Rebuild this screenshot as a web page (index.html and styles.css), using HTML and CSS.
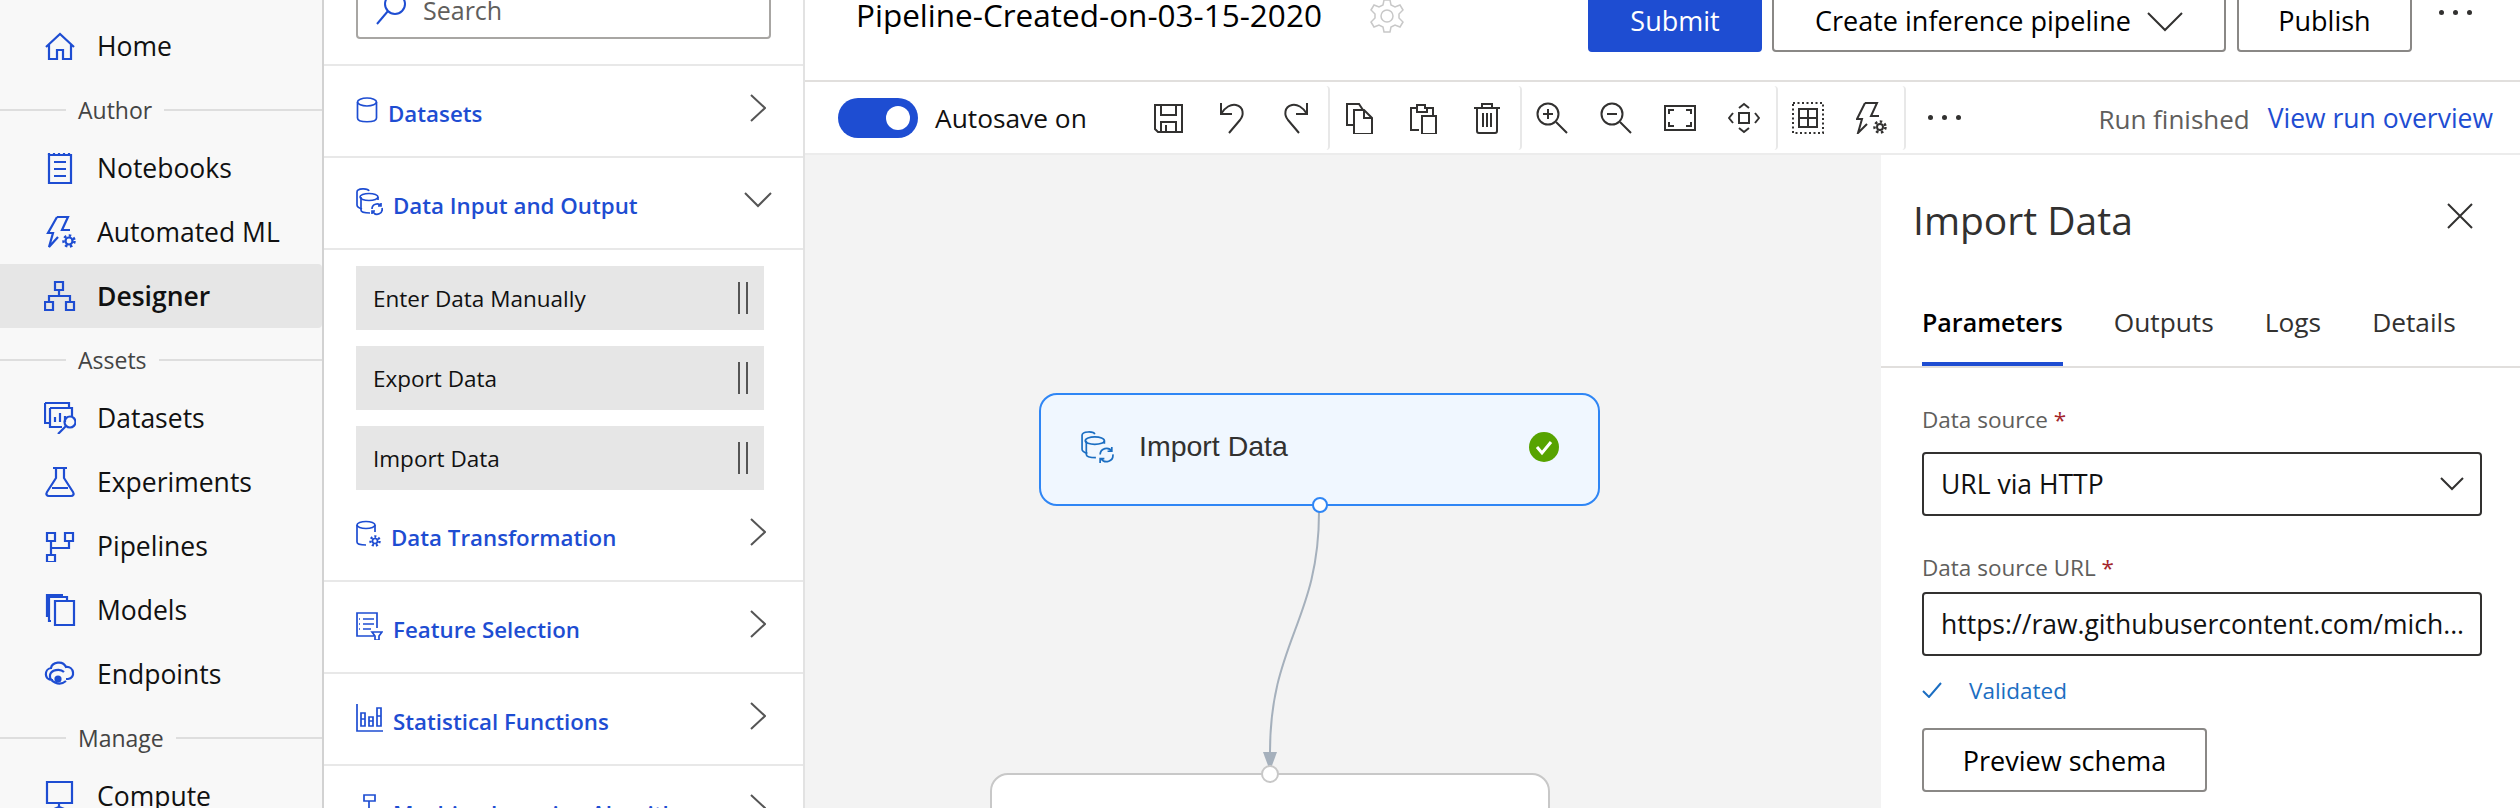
FILE: index.html
```html
<!DOCTYPE html>
<html lang="en">
<head>
    <meta charset="UTF-8">
    <title>Pipeline-Created-on-03-15-2020 - Designer</title>
    <link rel="stylesheet" href="styles.css">
</head>
<body>
    <nav class="nav">
        <a class="nav-item">
            <svg class="nav-icon" viewBox="0 0 32 32"><path d="M2 17 16 4l14 13M5 14v15h8v-9h6v9h8V14"/></svg>
            Home
        </a>
        <div class="nav-section">Author</div>
        <a class="nav-item">
            <svg class="nav-icon" viewBox="0 0 32 32"><path d="M5 3h22v28H5zM10 10h12M10 17h12M10 24h12"/><path d="M5 1v2M10 1v2M15 1v2M20 1v2M25 1v2"/></svg>
            Notebooks
        </a>
        <a class="nav-item">
            <svg class="nav-icon" viewBox="0 0 32 32"><path d="M13 1h11l-6 13h8M14 21 5 31l4-14H4L13 1"/><circle cx="25" cy="25" r="3.5"/><circle cx="25" cy="25" r="5.5" stroke-dasharray="2.5 2.5" stroke-width="2.5"/></svg>
            Automated ML
        </a>
        <a class="nav-item nav-active">
            <svg class="nav-icon" viewBox="0 0 32 32"><path d="M11 2h8v8h-8zM15 10v6M5 22v-6h21v6M1 22h8v8H1zM22 22h8v8h-8z"/></svg>
            Designer
        </a>
        <div class="nav-section">Assets</div>
        <a class="nav-item">
            <svg class="nav-icon" viewBox="0 0 32 32"><path d="M1 1h24v4M1 1v20h4M6 6h22v9M6 6v19h12M11 20v-5M16 20v-9M21 20v-6"/><circle cx="26" cy="20" r="5.5"/><path d="m22 24-8 8"/></svg>
            Datasets
        </a>
        <a class="nav-item">
            <svg class="nav-icon" viewBox="0 0 32 32"><path d="M9 2h14M12 2v10L3 26c-1.500 2.500 0 4 2 4h22c2 0 3.500-1.500 2-4l-9-14V2M8 22h16"/></svg>
            Experiments
        </a>
        <a class="nav-item">
            <svg class="nav-icon" viewBox="0 0 32 32"><path d="M3 3h8v8H3zM21 3h8v8h-8zM3 25h8v7H3zM7 11v14M7 18h18v-7"/></svg>
            Pipelines
        </a>
        <a class="nav-item">
            <svg class="nav-icon" viewBox="0 0 32 32"><path d="M11 7h19v24H11zM7 27H5V3h18v4M3 23V1h16"/></svg>
            Models
        </a>
        <a class="nav-item">
            <svg class="nav-icon" viewBox="0 0 32 32"><path d="M9 22H8c-8 0-8-11-1-12 1-6 12-8 15-1 8-1 10 11 2 12h-2M20 14c-4-4-13-2-14 3-1 6 9 12 16 6"/><circle class="icon-dot" cx="14" cy="21" r="2.500"/></svg>
            Endpoints
        </a>
        <div class="nav-section">Manage</div>
        <a class="nav-item">
            <svg class="nav-icon" viewBox="0 0 32 32"><path d="M3 2h25v21H3zM15 23v4M3 32l12-5 13 5"/></svg>
            Compute
        </a>
    </nav>

    <aside class="palette">
        <div class="search-row">
            <div class="search-box">
                <svg class="search-icon" viewBox="0 0 32 32"><circle cx="19" cy="10" r="10"/><path d="M12 17 1 30"/></svg>
                Search
            </div>
        </div>
        <div class="pal-row">
            <svg class="pal-icon" width="22" height="28" viewBox="0 0 22 28"><ellipse cx="11" cy="6" rx="9.500" ry="4"/><path d="M1.500 6v16c0 5 19 5 19 0V6"/></svg>
            <span class="pal-label">Datasets</span>
            <svg class="chev-right" viewBox="0 0 16 28"><path d="m1 1 14 13L1 27"/></svg>
        </div>
        <div class="pal-row">
            <svg class="pal-icon" width="27" height="28" viewBox="0 0 27 28"><path d="M1 4v13c0 2 2 3 5 4M1 4c0-4 11-4 12-1"/><ellipse cx="13" cy="9" rx="9" ry="3.500"/><path d="M5 9v13c0 2 4 3 9 3M22 9v3"/><path d="M16 21a5 5 0 0 1 9-3M26 20a5 5 0 0 1-9 4M25 15v3h-3M16 26v-3h3"/></svg>
            <span class="pal-label">Data Input and Output</span>
            <svg class="chev-down" viewBox="0 0 28 16"><path d="m1 1 13 13L27 1"/></svg>
        </div>
        <div class="pal-items">
            <div class="pal-item">Enter Data Manually<span class="grip"></span></div>
            <div class="pal-item">Export Data<span class="grip"></span></div>
            <div class="pal-item">Import Data<span class="grip"></span></div>
        </div>
        <div class="pal-row">
            <svg class="pal-icon" width="25" height="28" viewBox="0 0 25 28"><ellipse cx="10" cy="5" rx="9" ry="3.500"/><path d="M1 5v17c0 2 4 3 9 3M19 5v7"/><circle cx="19" cy="21" r="2.500"/><circle cx="19" cy="21" r="4.500" stroke-dasharray="2 2" stroke-width="2.500"/></svg>
            <span class="pal-label">Data Transformation</span>
            <svg class="chev-right" viewBox="0 0 16 28"><path d="m1 1 14 13L1 27"/></svg>
        </div>
        <div class="pal-row">
            <svg class="pal-icon" width="27" height="28" viewBox="0 0 27 28"><path d="M18 24H1V1h20v15M7 7h11M7 12h11M7 17h8M3 7h1M3 12h1M3 17h1M16 20h10l-3 4v4h-4v-4z"/></svg>
            <span class="pal-label">Feature Selection</span>
            <svg class="chev-right" viewBox="0 0 16 28"><path d="m1 1 14 13L1 27"/></svg>
        </div>
        <div class="pal-row">
            <svg class="pal-icon" width="27" height="28" viewBox="0 0 27 28"><path d="M1 0v27h26M5 9h4v13H5zM13 13h4v9h-4zM21 4h4v18h-4zM5 15h4M13 17h4M21 12h4"/></svg>
            <span class="pal-label">Statistical Functions</span>
            <svg class="chev-right" viewBox="0 0 16 28"><path d="m1 1 14 13L1 27"/></svg>
        </div>
        <div class="pal-row">
            <svg class="pal-icon pal-icon-ml" width="27" height="28" viewBox="0 0 27 28"><path d="M8 2h11v6H8zM13 8v8M2 22v-6h23v6"/></svg>
            <span class="pal-label">Machine Learning Algorithms</span>
            <svg class="chev-right" viewBox="0 0 16 28"><path d="m1 1 14 13L1 27"/></svg>
        </div>
    </aside>

    <main class="main">
        <header class="header">
            <h1 class="title">Pipeline-Created-on-03-15-2020</h1>
            <svg class="gear" viewBox="0 0 36 36"><circle cx="18" cy="18" r="6"/><path d="m15 2h6l1 5 4 2 5-2 3 5-4 4v4l4 4-3 5-5-2-4 2-1 5h-6l-1-5-4-2-5 2-3-5 4-4v-4l-4-4 3-5 5 2 4-2z"/></svg>
            <div class="header-actions">
                <button class="btn btn-primary">Submit</button>
                <button class="btn btn-pipeline">Create inference pipeline
                    <svg class="btn-chev" viewBox="0 0 36 20"><path d="m1 1 17 17L35 1"/></svg>
                </button>
                <button class="btn btn-publish">Publish</button>
                <span class="dots dots-header"><i></i><i></i><i></i></span>
            </div>
        </header>

        <div class="toolbar">
            <div class="autosave">
                <span class="toggle"><span class="toggle-knob"></span></span>
                Autosave on
            </div>
            <div class="tool-group">
                <span class="tool"><svg viewBox="0 0 32 32"><path d="M3 3h27v27H6l-3-3zM9 3v10h15V3M9 30V20h15v10M14 23v7"/></svg></span>
                <span class="tool"><svg viewBox="0 0 32 32"><path d="M5 1v11h11M5 12C9 5 15 2 20 3c8 2 8 10 4 15L13 31"/></svg></span>
                <span class="tool"><svg viewBox="0 0 32 32"><path d="M27 1v11H16M27 12C23 5 17 2 12 3 4 5 4 13 8 18l11 13"/></svg></span>
            </div>
            <div class="tool-group">
                <span class="tool"><svg viewBox="0 0 32 32"><path d="M9 23H3V2h12l4 6M10 8h10l8 8v16H10zM20 8v8h8"/></svg></span>
                <span class="tool"><svg viewBox="0 0 32 32"><path d="M11 28H3V6h6V3h8v3h8v7M14 14h14v18H14zM9 6v4h10V6"/></svg></span>
                <span class="tool"><svg viewBox="0 0 32 32"><path d="M2 6h26M10 6V2h10v4M5 6v23c0 1 1 2 2 2h16c1 0 2-1 2-2V6M11 11v14M15 11v14M19 11v14"/></svg></span>
            </div>
            <div class="tool-group">
                <span class="tool"><svg viewBox="0 0 32 32"><circle cx="12" cy="12" r="10.500"/><path d="m20 20 11 11M7 12h10M12 7v10"/></svg></span>
                <span class="tool"><svg viewBox="0 0 32 32"><circle cx="12" cy="12" r="10.500"/><path d="m20 20 11 11M7 12h10"/></svg></span>
                <span class="tool"><svg viewBox="0 0 32 32"><path d="M1 4h30v24H1zM5 12V8h5M27 12V8h-5M5 20v4h5M27 20v4h-5"/></svg></span>
                <span class="tool"><svg viewBox="0 0 32 32"><path d="M11 11h10v10H11zM11 6l5-4 5 4M11 26l5 4 5-4M5 11l-4 5 4 5M27 11l4 5-4 5"/></svg></span>
            </div>
            <div class="tool-group">
                <span class="tool"><svg viewBox="0 0 32 32"><path d="M1 1h30v30H1z" stroke-dasharray="2 2.500"/><path d="M7 7h18v18H7zM16 7v18M7 16h18"/></svg></span>
                <span class="tool"><svg viewBox="0 0 32 32"><path d="M9 1h12l-6 13h8M11 22 2 31l4-14H1L9 1"/><circle cx="24" cy="25" r="3"/><circle cx="24" cy="25" r="5.500" stroke-dasharray="2.500 2.500" stroke-width="2.500"/></svg></span>
            </div>
            <span class="dots dots-tool"><i></i><i></i><i></i></span>
            <div class="run-status">
                <span class="run-text">Run finished</span>
                <a class="run-link">View run overview</a>
            </div>
        </div>

        <div class="workspace">
            <section class="canvas">
                <svg class="edge" width="1075" height="653" viewBox="0 0 1075 653"><path d="M514 357c0 110-50 130-49 244"/><polygon points="458,597 472,597 465,616"/></svg>
                <div class="node node-selected">
                    <svg class="node-icon" viewBox="0 0 32 30"><path d="M1 4v13c0 2 2 3 5 4M1 4c0-4 11-4 12-1"/><ellipse cx="13" cy="9" rx="9" ry="3.500"/><path d="M5 9v13c0 2 4 3 9 3M22 9v3"/><path d="M18 22a6 6 0 0 1 11-3M30 22a6 6 0 0 1-11 4M29 15v4h-4M18 30v-4h4"/></svg>
                    <span class="node-name">Import Data</span>
                    <span class="node-check"><svg viewBox="0 0 30 30"><path d="m8 15 5 6 9-11"/></svg></span>
                    <span class="port port-out"></span>
                </div>
                <div class="node node-next">
                    <span class="port port-in"></span>
                </div>
            </section>

            <section class="details">
                <div class="details-head">
                    <h2 class="details-title">Import Data</h2>
                    <svg class="close" viewBox="0 0 26 26"><path d="m1 1 24 24M25 1 1 25"/></svg>
                </div>
                <div class="tabs">
                    <span class="tab tab-active">Parameters</span>
                    <span class="tab">Outputs</span>
                    <span class="tab">Logs</span>
                    <span class="tab">Details</span>
                </div>
                <form class="form">
                    <label class="field-label">Data source <em>*</em></label>
                    <div class="field">
                        URL via HTTP
                        <svg class="field-chev" viewBox="0 0 24 14"><path d="m1 1 11 11L23 1"/></svg>
                    </div>
                    <label class="field-label field-label-url">Data source URL <em>*</em></label>
                    <div class="field">https://raw.githubusercontent.com/mich...</div>
                    <div class="validated">
                        <svg class="check" viewBox="0 0 20 16"><path d="m1 9 6 6L19 1"/></svg>
                        Validated
                    </div>
                    <button class="btn btn-preview" type="button">Preview schema</button>
                </form>
            </section>
        </div>
    </main>
</body>
</html>
```

FILE: styles.css
```css
* {
    box-sizing: border-box;
}
html, body {
    margin: 0;
    height: 808px;
    overflow: hidden;
}
body {
    display: flex;
    font-family: "Open Sans", "Noto Sans", sans-serif;
    color: #111;
    background-color: #fff;
}
svg {
    fill: none;
    stroke: currentColor;
    stroke-width: 2;
    flex: none;
}
button {
    font-family: inherit;
}

/* left nav */
.nav {
    width: 324px;
    flex: none;
    padding-top: 14px;
    background-color: #f8f8f8;
    border-right: 2px solid #d2d2d2;
}
.nav-item {
    display: flex;
    align-items: center;
    height: 64px;
    padding-left: 44px;
    font-size: 26.500px;
    color: #111;
}
.nav-icon {
    width: 32px;
    height: 32px;
    margin-right: 21px;
    color: #1e4dd2;
    stroke-width: 2.200;
}
.icon-dot {
    fill: currentColor;
}
.nav-active {
    background-color: #e6e6e6;
    border-radius: 0 4px 4px 0;
    font-weight: 600;
}
.nav-section {
    display: flex;
    align-items: center;
    gap: 12px;
    height: 32px;
    margin: 16px 0 10px;
    font-size: 23px;
    color: #444;
}
.nav-section::before {
    content: "";
    width: 66px;
    height: 2px;
    background-color: #dedede;
}
.nav-section::after {
    content: "";
    flex: 1;
    height: 2px;
    background-color: #dedede;
}

/* module palette */
.palette {
    width: 481px;
    flex: none;
    height: 808px;
    overflow: hidden;
    border-right: 2px solid #e2e2e2;
}
.search-row {
    display: flex;
    align-items: flex-start;
    height: 66px;
    padding: 0 32px;
    border-bottom: 2px solid #e8e8e8;
}
.search-box {
    flex: 1;
    display: flex;
    align-items: center;
    height: 59px;
    margin-top: -20px;
    padding-left: 18px;
    border: 2px solid #a8a6a3;
    border-radius: 4px;
    font-size: 25px;
    line-height: 30px;
    color: #605e5c;
}
.search-icon {
    width: 32px;
    height: 32px;
    margin-right: 15px;
    color: #1e4dd2;
}
.pal-row {
    display: flex;
    align-items: center;
    height: 92px;
    padding: 4px 32px 0;
    gap: 10px;
    border-bottom: 2px solid #e8e8e8;
}
.pal-icon {
    color: #1e4dd2;
    margin-top: -6px;
    stroke-width: 1.700;
}
.pal-icon-ml {
    margin-top: -12px;
}
.pal-label {
    font-size: 22.300px;
    font-weight: 600;
    color: #1e4dd2;
    white-space: nowrap;
}
.chev-right {
    width: 16px;
    height: 28px;
    margin-left: auto;
    margin-top: -10px;
    margin-right: 5px;
    color: #555;
}
.chev-down {
    width: 28px;
    height: 16px;
    margin-left: auto;
    margin-top: -10px;
    margin-right: -1px;
    color: #555;
}
.pal-items {
    display: flex;
    flex-direction: column;
    gap: 16px;
    padding: 16px 39px 0 32px;
}
.pal-item {
    display: flex;
    align-items: center;
    justify-content: space-between;
    height: 64px;
    padding: 0 16px 0 17px;
    background-color: #e6e6e6;
    font-size: 22.500px;
    color: #111;
}
.grip {
    width: 10px;
    height: 32px;
    border-left: 2px solid #555;
    border-right: 2px solid #555;
}

/* header + toolbar */
.main {
    flex: 1;
    display: flex;
    flex-direction: column;
    min-width: 0;
}
.header {
    display: flex;
    height: 82px;
    padding-left: 51px;
    overflow: hidden;
    border-bottom: 2px solid #e1dfdd;
}
.title {
    margin: -4px 0 0;
    font-size: 31.500px;
    font-weight: 500;
    line-height: 38px;
    color: #000;
    white-space: nowrap;
}
.gear {
    width: 36px;
    height: 36px;
    margin: -2px 0 0 47px;
    color: #c8c8c8;
    stroke-width: 1.500;
}
.header-actions {
    display: flex;
    margin-left: auto;
    padding-right: 48px;
}
.btn {
    height: 64px;
    padding: 0;
    border: 2px solid #8a8886;
    border-radius: 4px;
    background-color: #fff;
    font-size: 27px;
    font-weight: 500;
    color: #000;
}
.header-actions .btn {
    margin-top: -12px;
}
.btn-primary {
    width: 174px;
    margin-right: 10px;
    border-color: #1e4dd2;
    background-color: #1e4dd2;
    color: #fff;
}
.btn-pipeline {
    display: flex;
    align-items: center;
    width: 454px;
    padding-left: 41px;
    margin-right: 11px;
}
.btn-chev {
    width: 36px;
    height: 20px;
    margin: 4px 0 0 16px;
    color: #323130;
}
.btn-publish {
    width: 175px;
}
.dots {
    display: flex;
    gap: 9px;
}
.dots i {
    width: 5px;
    height: 5px;
    border-radius: 50%;
    background-color: #323130;
}
.dots-header {
    margin: 10px 0 0 27px;
}
.toolbar {
    display: flex;
    align-items: center;
    height: 73px;
    padding-left: 33px;
    border-bottom: 2px solid #ececec;
}
.autosave {
    display: flex;
    align-items: center;
    gap: 17px;
    width: 298px;
    flex: none;
    font-size: 26.300px;
    color: #111;
}
.toggle {
    display: flex;
    align-items: center;
    justify-content: flex-end;
    width: 80px;
    height: 40px;
    padding-right: 8px;
    border-radius: 20px;
    background-color: #1e4dd2;
}
.toggle-knob {
    width: 24px;
    height: 24px;
    border-radius: 50%;
    background-color: #fff;
}
.tool-group {
    display: flex;
    height: 64px;
    margin-right: -2px;
    border-right: 2px solid #e8e8e8;
    border-radius: 0 4px 4px 0;
}
.tool {
    display: flex;
    align-items: center;
    justify-content: center;
    width: 64px;
    color: #323130;
}
.tool svg {
    width: 32px;
    height: 32px;
}
.dots-tool {
    margin-left: 24px;
}
.run-status {
    display: flex;
    align-items: center;
    gap: 18px;
    margin-left: auto;
    padding-right: 27px;
    font-size: 26.500px;
}
.run-text {
    color: #605e5c;
    margin-top: 3px;
    font-size: 26px;
}
.run-link {
    color: #1e4dd2;
}

/* canvas */
.workspace {
    flex: 1;
    display: flex;
    min-height: 0;
}
.canvas {
    position: relative;
    flex: 1;
    overflow: hidden;
    background-color: #f3f3f3;
}
.edge {
    position: absolute;
    left: 0;
    top: 0;
    color: #a5b0bc;
}
.edge polygon {
    fill: #a5b0bc;
    stroke: none;
}
.node {
    position: absolute;
    border-radius: 18px;
    border: 2px solid #c8c8c8;
    background-color: #fff;
}
.node-selected {
    left: 234px;
    top: 238px;
    width: 561px;
    height: 113px;
    display: flex;
    align-items: center;
    padding: 0 39px 6px 40px;
    border-color: #2f86f5;
    background-color: #f0f7ff;
}
.node-next {
    left: 185px;
    top: 618px;
    width: 560px;
    height: 100px;
}
.node-icon {
    width: 34px;
    height: 32px;
    color: #1b6ec2;
    stroke-width: 1.600;
}
.node-name {
    margin-left: 24px;
    font-family: "Liberation Sans", sans-serif;
    font-size: 28.500px;
    color: #323130;
}
.node-check {
    display: flex;
    margin-left: auto;
    width: 30px;
    height: 30px;
    border-radius: 50%;
    background-color: #57a300;
    color: #fff;
}
.node-check svg {
    stroke-width: 3;
}
.port {
    position: absolute;
    left: 50%;
    border-radius: 50%;
    background-color: #fff;
}
.port-out {
    bottom: -9px;
    width: 16px;
    height: 16px;
    margin-left: -8px;
    border: 2px solid #2f86f5;
}
.port-in {
    top: -10px;
    width: 18px;
    height: 18px;
    margin-left: -9px;
    border: 2px solid #c8c8c8;
}

/* details panel */
.details {
    width: 639px;
    flex: none;
}
.details-head {
    display: flex;
    align-items: center;
    justify-content: space-between;
    height: 130px;
    padding: 0 47px 0 32px;
}
.details-title {
    margin: -2px 0 0;
    font-size: 39px;
    font-weight: 500;
    color: #323130;
}
.close {
    width: 26px;
    height: 26px;
    margin: 0 0 8px;
    color: #323130;
}
.tabs {
    display: flex;
    gap: 51px;
    height: 83px;
    padding: 19px 0 0 41px;
    border-bottom: 2px solid #e1dfdd;
}
.tab {
    height: 62px;
    font-size: 26.300px;
    color: #323130;
}
.tab-active {
    border-bottom: 4px solid #1e4dd2;
    font-size: 25px;
    line-height: 36px;
    font-weight: 600;
    color: #000;
}
.form {
    padding: 28px 38px 0 41px;
}
.field-label {
    display: block;
    height: 56px;
    padding-top: 8px;
    font-size: 22.500px;
    color: #605e5c;
}
.field-label-url {
    padding-top: 16px;
}
.field-label em {
    font-style: normal;
    color: #a4262c;
}
.field {
    display: flex;
    align-items: center;
    justify-content: space-between;
    height: 64px;
    margin-bottom: 20px;
    padding: 0 16px 0 17px;
    border: 2px solid #323130;
    border-radius: 4px;
    font-size: 26.500px;
    color: #111;
    white-space: nowrap;
}
.field-chev {
    width: 24px;
    height: 14px;
    color: #323130;
}
.validated {
    display: flex;
    align-items: center;
    gap: 27px;
    height: 34px;
    margin: -3px 0 0;
    font-size: 22.500px;
    color: #1b6ec2;
}
.check {
    width: 20px;
    height: 16px;
}
.btn-preview {
    width: 285px;
    margin-top: 21px;
}
```
